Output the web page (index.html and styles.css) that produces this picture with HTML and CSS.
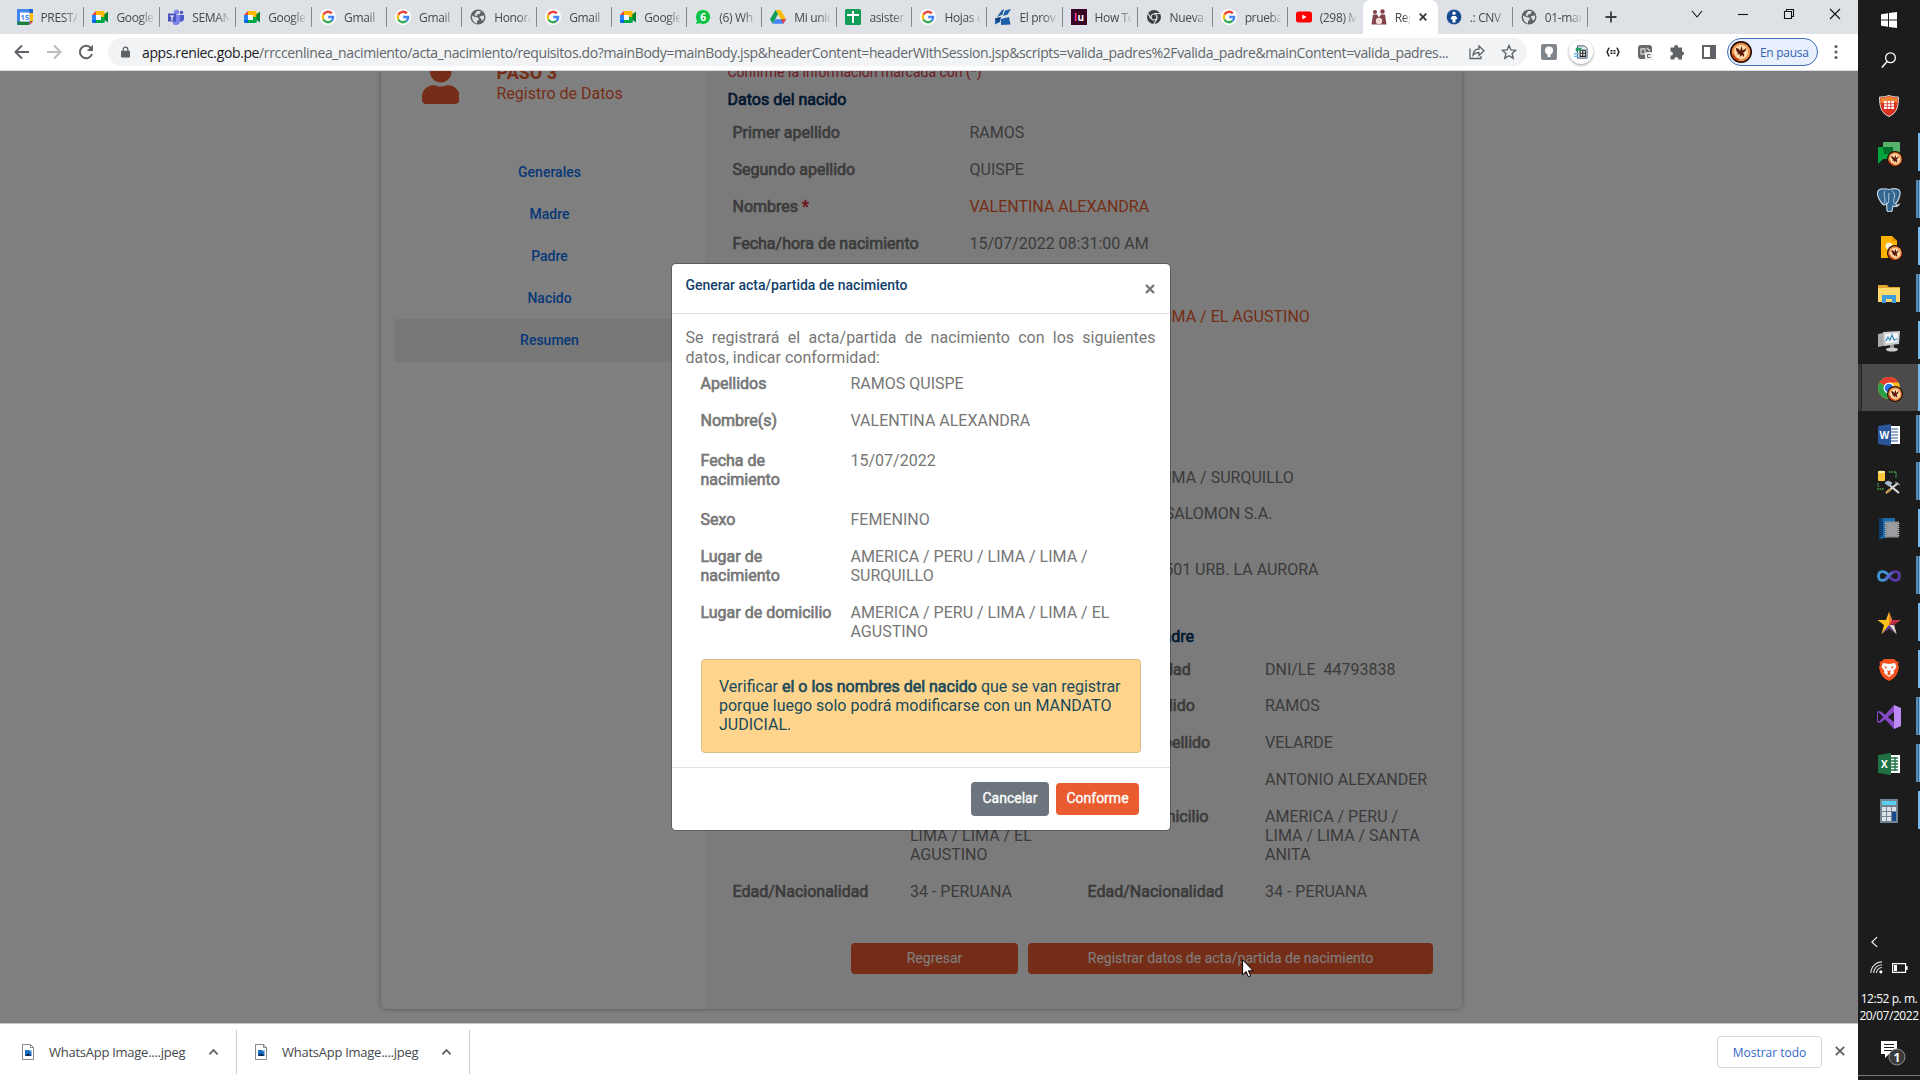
FILE: index.html
```html
<!DOCTYPE html>
<html lang="es">
<head>
<meta charset="utf-8">
<title>Registro de Datos</title>
<link rel="stylesheet" href="styles.css">
</head>
<body>
<svg class="defs" aria-hidden="true">
  <defs>
    <symbol id="google" viewBox="0 0 16 16"><circle cx="8" cy="8" r="8" fill="#fff"/><g fill="none" stroke-width="2.3"><path d="M11.8 4.4A5.2 5.2 0 0 0 3.4 5.6" stroke="#ea4335"/><path d="M3.4 5.6a5.2 5.2 0 0 0 0 4.8" stroke="#fbbc05"/><path d="M3.4 10.4a5.2 5.2 0 0 0 8.1 1.5" stroke="#34a853"/><path d="M11.5 11.9A5.2 5.2 0 0 0 13.2 8H8.2" stroke="#4285f4"/></g></symbol>
    <symbol id="meet" viewBox="0 0 16 16"><path d="M4 2v4H0z" fill="#ea4335"/><path d="M0 6h4v5H0z" fill="#2684fc"/><path d="M0 11h4v3H1.3A1.3 1.3 0 0 1 0 12.700z" fill="#0066da"/><path d="M4 2h7.500A1.300 1.300 0 0 1 12.800 3.300V8H9V6H4z" fill="#ffba00"/><path d="M4 11h5V8h3.800v4.700a1.300 1.300 0 0 1-1.300 1.300H4z" fill="#00ac47"/><path d="M12.300 5.500 16 2.500v11l-3.700-3z" fill="#00832d"/><path d="M4 6h5v5H4z" fill="#fff"/></symbol>
    <symbol id="globe" viewBox="0 0 16 16"><circle cx="8" cy="8" r="7.500" fill="#5f6368"/><path d="M2 6.500 5 8l3 .5 1 2-2 1.500v2.500C4 14 1.800 11 2 6.500zM7 2l4 .3L9.500 5 7 5.500 6.500 7.500 4.500 6zM10.500 7l3.500-.5v3l-2 2.500-1-2.500-1.500-1z" fill="#dee1e6"/></symbol>
    <symbol id="phoenix" viewBox="0 0 22 22"><circle cx="11" cy="11" r="11" fill="#2b0d05"/><circle cx="11" cy="11" r="9.300" fill="#f0964e"/><circle cx="11" cy="11" r="7" fill="#ffdcae"/><path d="M6 7c2 0 3.500 1.500 4.500 3 .2-2 0-3 1.200-4.500.6 1.500.5 2.500 1 4l3.800-2.500c-.8 3.500-2.500 4.200-3.500 5 1.500.8 1.600 2.300.3 4l-1-2.300-2.300 2.300-.2-3-3 .6L8.300 12C6.800 11 6 9.500 6 7z" fill="#5a1707"/><path d="M3 13a8.500 8.500 0 0 0 6 6" stroke="#d23c10" stroke-width="1.800" fill="none"/></symbol>
    <symbol id="jpeg" viewBox="0 0 12 16"><path d="M.5.5h8l3 3v12H.5z" fill="#fff" stroke="#888"/><path d="M8.500.5v3h3" fill="none" stroke="#888"/><path d="M3 6h6.500v6H3z" fill="#1b6fc2"/><path d="m3 12 3-3 3.500 3z" fill="#0b2e55"/><path d="M6.500 6h3v2z" fill="#9bd0f5"/></symbol>
    <symbol id="caret" viewBox="0 0 12 8"><path d="m1.500 6.500 4.500-4.500 4.500 4.500" fill="none" stroke="#5f6368" stroke-width="2"/></symbol>
  </defs>
</svg>

<div class="desktop">
<div class="browser">
  <header class="tabs">
    <div class="tab"><svg class="fav" viewBox="0 0 16 16"><path d="M0 0h16v12l-4 4H0z" fill="#4285f4"/><path d="M12 0h4v4h-4z" fill="#1967d2"/><path d="M12.500 4H16v8h-3.500z" fill="#fbbc04"/><path d="M0 12.500h12V16H1z" fill="#188038"/><path d="M12.500 12.500H16L12.500 16z" fill="#ea4335"/><path d="M3 3.500h9.500v9H3z" fill="#fff"/><text x="3.600" y="11" font-size="7.500" font-weight="700" fill="#4285f4">15</text></svg><span>PRESTA</span></div>
    <div class="tab"><svg class="fav"><use href="#meet"/></svg><span>Google</span></div>
    <div class="tab"><svg class="fav" viewBox="0 0 16 16"><circle cx="8.500" cy="3" r="2.500" fill="#7b83eb"/><circle cx="13.500" cy="3.500" r="1.800" fill="#5059c9"/><path d="M11 6h5v4a3 3 0 0 1-5 2z" fill="#5059c9"/><path d="M5 6h7v6a4 4 0 0 1-7.500 2z" fill="#7b83eb"/><path d="M0 4.500h8v8H0z" fill="#4b53bc"/><path d="M2 6.500h4v1H4.600v4H3.400v-4H2z" fill="#fff"/></svg><span>SEMAN</span></div>
    <div class="tab"><svg class="fav"><use href="#meet"/></svg><span>Google</span></div>
    <div class="tab"><svg class="fav"><use href="#google"/></svg><span>Gmail</span></div>
    <div class="tab"><svg class="fav"><use href="#google"/></svg><span>Gmail</span></div>
    <div class="tab"><svg class="fav"><use href="#globe"/></svg><span>Honora</span></div>
    <div class="tab"><svg class="fav"><use href="#google"/></svg><span>Gmail</span></div>
    <div class="tab"><svg class="fav"><use href="#meet"/></svg><span>Google</span></div>
    <div class="tab"><svg class="fav" viewBox="0 0 16 16"><path d="M8 .5A7.500 7.500 0 1 1 4.500 14.600L.5 15.600l1-3.800A7.500 7.500 0 0 1 8 .5z" fill="#0fc144" stroke="#fff" stroke-width=".6"/><text x="5.200" y="11.700" font-size="10" font-weight="700" fill="#fff">6</text></svg><span>(6) Wh</span></div>
    <div class="tab"><svg class="fav" viewBox="0 0 16 16"><path d="M5.500 1h5L16 10.300h-5z" fill="#fbbc04"/><path d="M5.500 1 8 5.300 2.700 14.700 0 10.300z" fill="#0f9d58"/><path d="M5.300 10.300H16l-2.700 4.400H2.700z" fill="#4285f4"/><path d="M11 10.300h5l-2.700 4.400z" fill="#ea4335"/></svg><span>Mi unid</span></div>
    <div class="tab"><svg class="fav" viewBox="0 0 16 16"><rect width="16" height="16" rx="1.500" fill="#0f9d58"/><path d="M7 2h2v12H7zM2 5h12v2H2z" fill="#fff"/></svg><span>asisten</span></div>
    <div class="tab"><svg class="fav"><use href="#google"/></svg><span>Hojas d</span></div>
    <div class="tab"><svg class="fav" viewBox="0 0 16 16"><path d="M6.500 1.500 9 0 7.500 5.500 2 8zM0 9.500 6 8 5 13l-5 2.500zM10 1.500 16 0l-3.500 5.500L8 7zM6 10l8-2 1.500 7.500L6 16z" fill="#1d5fa8"/><path d="m0 9.500 6-1.500-3 5z" fill="#123b70"/></svg><span>El prove</span></div>
    <div class="tab"><svg class="fav" viewBox="0 0 16 16"><path d="M0 0h16v16H0z" fill="#3a0426"/><text x="3" y="12" font-size="10" font-weight="700" fill="#ff3f94">l</text><text x="6.500" y="12" font-size="10" font-weight="700" fill="#fff">u</text></svg><span>How To</span></div>
    <div class="tab"><svg class="fav" viewBox="0 0 16 16"><circle cx="8" cy="8" r="7" fill="#3c4043"/><circle cx="8" cy="8" r="3" fill="#3c4043" stroke="#dee1e6" stroke-width="1.200"/><path d="M8 4.500h6.500M5 9.800 2 4.500M11 9.800 7.800 15" stroke="#dee1e6" stroke-width="1.200"/></svg><span>Nueva</span></div>
    <div class="tab"><svg class="fav"><use href="#google"/></svg><span>prueba</span></div>
    <div class="tab nosep"><svg class="fav" viewBox="0 0 16 16"><rect y="2.500" width="16" height="11" rx="2.500" fill="#f00"/><path d="m6.300 5.500 4.200 2.500-4.200 2.500z" fill="#fff"/></svg><span>(298) M</span></div>
    <div class="tab active"><svg class="fav" viewBox="0 0 16 16"><path d="M2 5.500h4l2 3 2-3h4l1.500 10H.5z" fill="#80444a"/><circle cx="4" cy="3" r="2" fill="#80444a"/><circle cx="11.500" cy="2.500" r="2.200" fill="#80444a"/><circle cx="8" cy="12" r="3.200" fill="#f1dcd9"/></svg><span>Reg</span><svg class="close-tab" viewBox="0 0 8 8"><path d="m.7.7 6.600 6.600M7.300.7.7 7.300" stroke="#333" stroke-width="1.700"/></svg></div>
    <div class="tab"><svg class="fav" viewBox="0 0 16 16"><circle cx="8" cy="8" r="7.700" fill="#15498f" stroke="#fff" stroke-width=".5"/><circle cx="8" cy="4.300" r="1.700" fill="#fff"/><path d="M6 7h4l1.500 3-2 .5v3h-3v-3l-2-.5z" fill="#fff"/></svg><span>.: CNV</span></div>
    <div class="tab"><svg class="fav"><use href="#globe"/></svg><span>01-mar</span></div>
    <svg class="new-tab" viewBox="0 0 12 12"><path d="M6 .5v11M.5 6h11" stroke="#3c4043" stroke-width="1.800"/></svg>
    <div class="window-buttons">
      <svg viewBox="0 0 12 12"><path d="m1 3 5 6 5-6" /></svg>
      <svg viewBox="0 0 12 12"><path d="M1 6.500h10" /></svg>
      <svg viewBox="0 0 12 12"><path d="M1.500 3.500h7v7h-7zM3.500 3.500v-2h7v7h-2" /></svg>
      <svg viewBox="0 0 12 12"><path d="m1 1 10 10M11 1 1 11" /></svg>
    </div>
  </header>

  <div class="toolbar">
    <div class="tool"><svg viewBox="0 0 16 16"><path d="M15 8H2M8 1.500 1.500 8 8 14.500" stroke="#5f6368" stroke-width="2" fill="none"/></svg></div>
    <div class="tool"><svg viewBox="0 0 16 16"><path d="M1 8h13M8 1.500 14.500 8 8 14.500" stroke="#babcbe" stroke-width="2" fill="none"/></svg></div>
    <div class="tool"><svg viewBox="0 0 16 16"><path d="M13 4.200A6.200 6.200 0 1 0 14 10" stroke="#5f6368" stroke-width="2" fill="none"/><path d="M15 .8v6.200H8.800z" fill="#5f6368"/></svg></div>
    <div class="omnibox">
      <svg class="lock" viewBox="0 0 10 12"><path d="M1 4.500h8a1 1 0 0 1 1 1V11a1 1 0 0 1-1 1H1a1 1 0 0 1-1-1V5.500a1 1 0 0 1 1-1z" fill="#5f6368"/><path d="M2.500 5V3a2.500 2.500 0 0 1 5 0v2" fill="none" stroke="#5f6368" stroke-width="1.400"/></svg>
      <span class="url"><b>apps.reniec.gob.pe</b>/rrccenlinea_nacimiento/acta_nacimiento/requisitos.do?mainBody=mainBody.jsp&amp;headerContent=headerWithSession.jsp&amp;scripts=valida_padres%2Fvalida_padre&amp;mainContent=valida_padres...</span>
      <svg class="omni-icon" viewBox="0 0 16 16"><path d="M1 4.500v10h11V12M4 11c.5-4 3-6 6-6V2l5 4.800-5 4.700V8.500c-3 0-4.500.8-6 2.500z" fill="none" stroke="#5f6368" stroke-width="1.300"/></svg>
      <svg class="omni-icon" viewBox="0 0 16 16"><path d="m8 1.500 1.900 4.400 4.800.4-3.600 3.200 1.100 4.700L8 11.700l-4.200 2.500 1.100-4.700L1.300 6.300l4.800-.4z" fill="none" stroke="#5f6368" stroke-width="1.400"/></svg>
    </div>
    <div class="tool"><svg viewBox="0 0 16 16"><rect width="16" height="16" rx="2" fill="#80868b"/><circle cx="8" cy="6.500" r="4" fill="#fff"/><path d="M6.500 10h3v3h-3z" fill="#fff"/></svg></div>
    <div class="tool"><div class="round"><svg viewBox="0 0 16 16"><path d="M4 1h8l3 3v11H4z" fill="#dfe9f5" stroke="#34475f"/><path d="M7 6h6v7H7zM7 9.500h6M10 6v7" fill="#fff" stroke="#222" stroke-width="1.200"/><path d="M2 3h7l-2 5-2-2-3 2z" fill="#2c9a63"/><path d="M0 10h5M0 13h5" stroke="#6fb7e6" stroke-width="1.500"/></svg></div></div>
    <div class="tool"><svg viewBox="0 0 16 16"><path d="M4.500 4C2.500 4 3.500 7 2 8c1.500 1 .5 4 2.500 4M11.500 4c2 0 1 3 2.500 4-1.500 1-.5 4-2.500 4M5.500 6.700h2m1 0h2M5.500 9.300h2m1 0h2" fill="none" stroke="#222" stroke-width="1.500"/></svg></div>
    <div class="tool"><svg viewBox="0 0 16 16"><rect x="1" y="1" width="14" height="14" rx="3" fill="#666a6d"/><path d="M4 5h4v5H4zM10 4l3 3" stroke="#d5d5d5" fill="none" stroke-width="1.300"/><rect x="8" y="8" width="8" height="8" rx="2" fill="#eee"/><path d="M13.500 10.500h-3v3h3" fill="none" stroke="#666"/></svg></div>
    <div class="tool"><svg viewBox="0 0 16 16"><path d="M1.500 3.500h3.700a2 2 0 1 1 3.800 0h4v4a2 2 0 1 1 0 4v4H9.200a1.900 1.900 0 1 0-3.700 0h-4v-4a1.900 1.900 0 1 0 0-3.700z" fill="#5f6368"/></svg></div>
    <div class="tool"><svg viewBox="0 0 16 16"><path d="M2 2h12v12H2z" fill="none" stroke="#5f6368" stroke-width="2"/><path d="M9 2h5v12H9z" fill="#5f6368"/></svg></div>
    <div class="profile"><svg class="avatar"><use href="#phoenix"/></svg><span>En pausa</span></div>
    <div class="tool last"><svg viewBox="0 0 16 16"><g fill="#5f6368"><circle cx="8" cy="2.500" r="1.600"/><circle cx="8" cy="8" r="1.600"/><circle cx="8" cy="13.500" r="1.600"/></g></svg></div>
  </div>

  <main class="page">
    <div class="card">
      <aside class="side">
        <div class="step">
          <svg class="user" viewBox="0 0 448 512"><path d="M224 256c70.700 0 128-57.300 128-128S294.700 0 224 0 96 57.300 96 128s57.300 128 128 128zm89.600 32h-16.700c-22.200 10.200-46.900 16-72.900 16s-50.600-5.800-72.900-16h-16.700C60.200 288 0 348.200 0 422.400V464c0 26.500 21.500 48 48 48h352c26.500 0 48-21.500 48-48v-41.600c0-74.200-60.200-134.400-134.400-134.400z"/></svg>
          <div><div class="step-no">PASO 3</div><div>Registro de Datos</div></div>
        </div>
        <nav><a>Generales</a><a>Madre</a><a>Padre</a><a>Nacido</a><a class="current">Resumen</a></nav>
      </aside>
      <section class="summary">
        <p class="note">Confirme la información marcada con (*)</p>
        <h2>Datos del nacido</h2>
        <div class="row"><label>Primer apellido</label><span>RAMOS</span></div>
        <div class="row"><label>Segundo apellido</label><span>QUISPE</span></div>
        <div class="row"><label>Nombres <i>*</i></label><span class="mark">VALENTINA ALEXANDRA</span></div>
        <div class="row"><label>Fecha/hora de nacimiento</label><span>15/07/2022 08:31:00 AM</span></div>
        <div class="row short"></div>
        <div class="row"><label></label><span class="mark">AMERICA / PERU / LIMA / LIMA / EL AGUSTINO</span></div>
        <div class="row birthplace"><label></label><span>AMERICA / PERU / LIMA / LIMA / SURQUILLO</span></div>
        <div class="row short"><label></label><span class="centre">SALOMON S.A.</span></div>
        <div class="row address"><label></label><span class="street">501 URB. LA AURORA</span></div>
        <div class="parents">
          <div class="mother">
            <div class="row"><label></label><span>AMERICA / PERU / LIMA / LIMA / EL AGUSTINO</span></div>
            <div class="row"><label>Edad/Nacionalidad</label><span>34 - PERUANA</span></div>
          </div>
          <div class="father">
            <h2>Datos del padre</h2>
            <div class="row short"><label class="doc-id">Doc. identidad</label><span>DNI/LE&nbsp; 44793838</span></div>
            <div class="row"><label>Primer apellido</label><span>RAMOS</span></div>
            <div class="row"><label>Segundo apellido</label><span>VELARDE</span></div>
            <div class="row"><label></label><span>ANTONIO ALEXANDER</span></div>
            <div class="row"><label>Lug. de domicilio</label><span>AMERICA / PERU / LIMA / LIMA / SANTA ANITA</span></div>
            <div class="row"><label>Edad/Nacionalidad</label><span>34 - PERUANA</span></div>
          </div>
        </div>
        <div class="actions"><button class="back">Regresar</button><button class="send">Registrar datos de acta/partida de nacimiento</button></div>
      </section>
    </div>

    <div class="backdrop">
      <div class="modal">
        <div class="modal-head"><h3>Generar acta/partida de nacimiento</h3><svg viewBox="0 0 10 10"><path d="m1 1 8 8M9 1 1 9" stroke="#777" stroke-width="2.400"/></svg></div>
        <div class="modal-body">
          <p>Se registrará el acta/partida de nacimiento con los siguientes datos, indicar conformidad:</p>
          <dl>
            <dt>Apellidos</dt><dd>RAMOS QUISPE</dd>
            <dt>Nombre(s)</dt><dd>VALENTINA ALEXANDRA</dd>
            <dt class="date">Fecha de nacimiento</dt><dd class="date">15/07/2022</dd>
            <dt>Sexo</dt><dd>FEMENINO</dd>
            <dt>Lugar de nacimiento</dt><dd>AMERICA / PERU / LIMA / LIMA / SURQUILLO</dd>
            <dt>Lugar de domicilio</dt><dd>AMERICA / PERU / LIMA / LIMA / EL AGUSTINO</dd>
          </dl>
          <div class="alert">Verificar <b>el o los nombres del nacido</b> que se van registrar porque luego solo podrá modificarse con un MANDATO JUDICIAL.</div>
        </div>
        <div class="modal-foot"><button class="cancel">Cancelar</button><button class="ok">Conforme</button></div>
      </div>
    </div>
  </main>

  <footer class="downloads">
    <div class="file"><svg class="doc"><use href="#jpeg"/></svg><span>WhatsApp Image....jpeg</span><svg class="up"><use href="#caret"/></svg></div>
    <div class="file"><svg class="doc"><use href="#jpeg"/></svg><span>WhatsApp Image....jpeg</span><svg class="up"><use href="#caret"/></svg></div>
    <div class="show-all">Mostrar todo</div>
    <svg class="close-bar" viewBox="0 0 10 10"><path d="m.8.8 8.400 8.400M9.200.8.8 9.200" stroke="#5f6368" stroke-width="1.900"/></svg>
  </footer>
</div>

<aside class="taskbar">
  <div class="task start"><svg viewBox="0 0 16 16"><path d="m0 2.200 7-1v6.300H0zm8-1.100L16 0v7.500H8zM0 8.500h7v6.300l-7-1zm8 0h8V16l-8-1.100z" fill="#fff"/></svg></div>
  <div class="task search"><svg viewBox="0 0 24 24"><circle cx="14" cy="9" r="6.500" fill="none" stroke="#fff" stroke-width="1.700"/><path d="m9.500 14-7 8" stroke="#fff" stroke-width="1.900"/></svg></div>
  <div class="task"><svg viewBox="0 0 24 24"><path d="M12 1.500c3 1 6 1.500 9.500 1.500-.2 10-1.500 16-9.500 19.500C4 19 2.700 13 2.500 3 6 3 9 2.500 12 1.500z" fill="#d9321f" stroke="#ddd"/><path d="M12 2.500c3 1 5.500 1.300 8.500 1.300v5c-6-2-11 1-17 0v-5c3 0 5.500-.3 8.500-1.300z" fill="#ee8434"/><path d="M7 7h10v8H7z" fill="#fff"/><path d="M7 9.700h10M7 12.300h10M10.300 7v8M13.700 7v8" stroke="#d9321f" stroke-width=".8"/></svg></div>
  <div class="task run"><svg viewBox="0 0 24 24"><rect x="6" y="1" width="17" height="14" rx="1" fill="#57b36b"/><path d="M1 6h15v12H6l-5 5z" fill="#00a53c"/><path d="M6 6h10v7H7z" fill="#00722b"/></svg><svg class="mini"><use href="#phoenix"/></svg></div>
  <div class="task multi"><svg viewBox="0 0 24 24"><path d="M7 1c3-.5 4 .5 5 .5S16 0 20 1s3.500 5 2 9c-.8 2.500-1.500 4-3 5v2c1 .5 2 0 3-.5-1 2-4 2.500-6 1.500l-1 5c-2 1.500-4 1-5-.5l-.5-7c-1 1.500-3 2-4 .5C2 12 .5 9 .5 5 .5 2 3 .5 7 1z" fill="#336791" stroke="#c5d4e1" stroke-width="1.200"/><path d="M8 3c-2 3 0 6 0 9s-1 3-3 4M15 3c3 2 3 6 2 8s0 4 1 5M12 5c-1 3 1 9-2 11" fill="none" stroke="#c5d4e1" stroke-width=".9"/></svg></div>
  <div class="task run"><svg viewBox="0 0 24 24"><path d="M4 1h11l5 5v17H4z" fill="#ffb300"/><path d="M15 1v5h5z" fill="#e59100"/><circle cx="12" cy="11" r="3.500" fill="#fff6df"/></svg><svg class="mini"><use href="#phoenix"/></svg></div>
  <div class="task multi"><svg viewBox="0 0 24 24"><path d="M1 3h9l2 2h11v15H1z" fill="#e2a52e"/><path d="M1 6h22v14H1z" fill="#ffda6b"/><path d="M5 13h14v8h-4v-4H9v4H5z" fill="#3e9bdc"/></svg></div>
  <div class="task run"><svg viewBox="0 0 24 24"><path d="m1 5 10-2v13L1 18z" fill="#a8abad"/><path d="m6 3 17-1-1 13-15 2z" fill="#c9cdd0"/><path d="m8 5 13-1-1 9-11 1.500z" fill="#f1f7fa"/><path d="m9 12 2-4 2 3 2-5 2 5 3-1" stroke="#2d82b5" fill="none" stroke-width="1.100"/><path d="M13 16h4v3h-4z" fill="#999"/><ellipse cx="15" cy="20.500" rx="6" ry="2" fill="#ccc"/></svg></div>
  <div class="task multi selected"><svg viewBox="0 0 24 24"><circle cx="12" cy="12" r="11" fill="#fbc116"/><path d="M12 12 2.500 6.500A11 11 0 0 1 21.500 6.500H12z" fill="#e33b2e"/><path d="M2.500 6.500A11 11 0 0 0 12 23l4.500-8.500L12 12z" fill="#2a9f48"/><circle cx="12" cy="12" r="5.500" fill="#fff"/><circle cx="12" cy="12" r="4.300" fill="#2673e8"/></svg><svg class="mini"><use href="#phoenix"/></svg></div>
  <div class="task multi"><svg viewBox="0 0 24 24"><path d="M12 3h11v18H12z" fill="#fff"/><path d="M14 6h7M14 9h7M14 12h7M14 15h7M14 18h7" stroke="#2a5699" stroke-width="1.200"/><path d="M1 3 14 1v22L1 21z" fill="#2a5699"/><text x="2.500" y="16" font-size="10" font-weight="700" fill="#fff">W</text></svg></div>
  <div class="task multi"><svg viewBox="0 0 24 24"><rect x="1" y="1" width="7" height="10" rx="1" fill="#ffc83a"/><ellipse cx="4.500" cy="2" rx="3.500" ry="1.200" fill="#fff1a8"/><path d="M12 2h7v6M1 13v6h6" fill="none" stroke="#4fae54" stroke-width="1.300" stroke-dasharray="1.500 1"/><path d="m9 23 12-10M10 13l12 10" stroke="#d8d8d8" stroke-width="2.200"/><path d="m8 13 3-2 4 2-3 3zM18 12l5 3" stroke="#a9b8cc" fill="#a9b8cc"/><path d="m9 23 5-4" stroke="#ce9748" stroke-width="2.200"/></svg></div>
  <div class="task run"><svg viewBox="0 0 24 24"><path d="M2 1h16v18L2 22z" fill="#1f6aa8"/><path d="M2 1h4v17l-4 4z" fill="#0f3f6d"/><rect x="8.500" y="5" width="13" height="15" fill="#77797b" stroke="#bbb" stroke-width="1.600" stroke-dasharray="1 1"/><path d="M9.500 6h11v13h-11z" fill="#9b9da0"/></svg></div>
  <div class="task multi"><svg viewBox="0 0 24 24"><path d="M12 12C8 6 1.500 6.500 1.500 12S8 18 12 12z" fill="none" stroke="#4295d4" stroke-width="2.800"/><path d="M12 12c4-6 10.500-5.500 10.500 0S16 18 12 12z" fill="none" stroke="#5a3ba8" stroke-width="2.800"/><path d="m8 15.500 7-7" stroke="#5267c9" stroke-width="2.800"/></svg></div>
  <div class="task run"><svg viewBox="0 0 24 24"><path d="m12 1 3 8h8.500L17 14l2.500 9-7.500-5.500L4.500 23 7 14 .5 9H9z" fill="#fcc21b"/><path d="M12 1v13l3-5z" fill="#ef7b2d"/><path d="M23.500 9 12 14l3-5z" fill="#c52b4b"/><path d="m23.500 9-6.500 5-5 0z" fill="#8b1c3d"/><path d="m17 14 2.500 9-7.500-9z" fill="#d8d8d8"/><path d="M12 14v3.500l7.500 5.500zM12 14v3.500L4.500 23z" fill="#55309c"/></svg></div>
  <div class="task run"><svg viewBox="0 0 24 24"><path d="M7 1h10l2 2 2.500 1-.5 3 1 2c-1.500 7-3 11-10 14C5 20 3.500 16 2 9l1-2-.5-3L5 3z" fill="#f4511e"/><path d="m6 5 6 1 6-1 1.500 4-3 4 .5 2-5 4-5-4 .5-2-3-4z" fill="#fff"/><path d="m7 8 3 1-1 2zM17 8l-3 1 1 2zM10 12l2 1 2-1-1 3 1 1-2 1.500L10 16l1-1z" fill="#f4511e"/></svg></div>
  <div class="task multi"><svg viewBox="0 0 24 24"><path d="m17 0 7 3v18l-7 3z" fill="#bd8af5"/><path d="M17 0 3 15.500l-3 2v-11l3 2L17 24v-7L4 6.500 1 6v12l3-.5L17 7z" fill="#8549c6"/></svg></div>
  <div class="task multi"><svg viewBox="0 0 24 24"><path d="M12 3h11v18H12z" fill="#fff"/><path d="M14 6h7M14 9h7M14 12h7M14 15h7M14 18h7M18 5v14" stroke="#207245" stroke-width="1.300"/><path d="M1 3 14 1v22L1 21z" fill="#207245"/><text x="4" y="16" font-size="10" font-weight="700" fill="#fff">X</text></svg></div>
  <div class="task run"><svg viewBox="0 0 24 24"><path d="M3 0h18v24H3z" fill="#748391"/><path d="M5 2h14v4H5z" fill="#5bd0ee"/><path d="M5 8h4v4H5zm5 0h4v4h-4zm5 0h4v4h-4zM5 13h4v4H5zm5 0h4v4h-4zM5 18h4v4H5zm5 0h4v4h-4z" fill="#dce3e9"/><path d="M15 13h4v9h-4z" fill="#17498d"/></svg></div>
  <div class="tray">
    <svg class="chev" viewBox="0 0 8 12"><path d="M7 .5 1 6l6 5.500" fill="none" stroke="#fff" stroke-width="1.300"/></svg>
    <div class="status">
      <svg viewBox="0 0 14 14"><path d="M1 13A12 12 0 0 1 13 1M4 13a9 9 0 0 1 9-9M7 13a6 6 0 0 1 6-6" fill="none" stroke="#ddd" stroke-width="1.200"/><circle cx="11.700" cy="11.700" r="1.700" fill="#fff"/></svg>
      <svg class="battery" viewBox="0 0 16 10"><path d="M.6.6h13v8.800H.6z" fill="none" stroke="#fff" stroke-width="1.200"/><path d="M2 2h3v6H2zM14 3h1.500v4H14z" fill="#fff"/></svg>
    </div>
    <div class="clock">12:52 p. m.<br>20/07/2022</div>
    <svg class="notify" viewBox="0 0 26 26"><path d="M1 1h16v13H9l-4 4v-4H1z" fill="#fff"/><path d="M4 4.500h10M4 7.500h10M4 10.500h10" stroke="#1c1c1c" stroke-width="1.200"/><circle cx="17" cy="17" r="8" fill="#3b3b3b" stroke="#8a8a8a"/><text x="13.500" y="21.500" font-size="12" font-weight="700" fill="#fff">1</text></svg>
  </div>
</aside>
</div>
<svg class="cursor" viewBox="0 0 12 19"><path d="M.6.8v15l3.500-3.300 2.300 5.300 2.300-1-2.300-5h4.800z" fill="#fff" stroke="#000"/></svg>
</body>
</html>
```
FILE: styles.css
```css
* { box-sizing: border-box; }
body { margin: 0; width: 1920px; height: 1080px; overflow: hidden; font-family: "Open Sans", "Noto Sans", sans-serif; }
svg { display: block; flex: none; }
.defs { position: absolute; width: 0; height: 0; }
.desktop { display: flex; height: 1080px; }
.browser { width: 1858px; display: flex; flex-direction: column; }

/* tab strip */
.tabs { height: 34px; background: #dee1e6; display: flex; align-items: flex-start; padding-left: 8.500px; }
.tab { width: 75.050px; height: 34px; display: flex; align-items: center; padding: 0 7px 0 8px; position: relative; flex: none; }
.tab:nth-child(-n+4) { width: 75.900px; }
.tab::after { content: ""; position: absolute; right: 0; top: 7px; width: 1px; height: 20px; background: #83878c; }
.tab.nosep::after, .tab.active::after { display: none; }
.fav { width: 16px; height: 16px; }
.tab span { margin-left: 8px; width: 37px; font-size: 12px; letter-spacing: -.35px; color: #45494d; white-space: nowrap; overflow: hidden; -webkit-mask-image: linear-gradient(90deg, #000 65%, rgba(0,0,0,.15)); mask-image: linear-gradient(90deg, #000 65%, rgba(0,0,0,.15)); }
.tab.active { background: #fff; border-radius: 8px 8px 0 0; }
.tab.active span { width: 15px; }
.close-tab { width: 8px; height: 8px; margin-left: 9px; }
.new-tab { width: 12px; height: 12px; margin: 11px 0 0 17px; }
.window-buttons { display: flex; gap: 34px; margin: 8px 17px 0 auto; }
.window-buttons svg { width: 12px; height: 12px; fill: none; stroke: #111; stroke-width: 1.100; }

/* toolbar */
.toolbar { height: 37px; background: #fff; border-bottom: 1px solid #d9dbde; display: flex; align-items: center; padding-left: 6px; flex: none; }
.tool { width: 32px; display: flex; justify-content: center; flex: none; }
.tool svg { width: 16px; height: 16px; }
.tool.last { margin-left: 2px; }
.omnibox { width: 1419px; height: 28px; margin: 0 6px; background: #f1f3f4; border-radius: 14px; display: flex; align-items: center; padding-left: 13px; flex: none; }
.lock { width: 9px; height: 12px; margin-right: 12px; }
.url { width: 1319px; font-size: 14px; letter-spacing: -.378px; color: #63676b; white-space: nowrap; }
.url b { font-weight: 400; color: #202124; }
.omni-icon { width: 16px; height: 16px; margin-left: 8px; margin-right: 8px; }
.round { width: 24px; height: 24px; border-radius: 50%; background: #fff; box-shadow: 0 1px 3px rgba(0,0,0,.4); display: grid; place-items: center; }
.tool .round svg { width: 14px; height: 14px; }
.profile { width: 91px; height: 28px; margin-left: 2px; border: 1px solid #3c6fb4; border-radius: 14px; background: #e8f0fe; display: flex; align-items: center; padding-left: 2px; gap: 8px; font-size: 12px; letter-spacing: -.3px; color: #3263b0; white-space: nowrap; flex: none; }
.avatar { width: 22px; height: 22px; }

/* page */
.page { height: 952px; position: relative; overflow: hidden; background: #fff; font-family: Roboto, sans-serif; font-size: 16px; line-height: 19px; color: #777; flex: none; }
.card { width: 1081px; height: 938px; margin-left: 380.500px; border-radius: 0 0 6px 6px; display: grid; grid-template-columns: 324px 1fr; overflow: hidden; box-shadow: 0 0 5px rgba(0,0,0,.35); }
.side { padding-left: 14px; }
.step { display: flex; gap: 37.500px; height: 80px; padding-left: 27px; color: #ea5b2f; }
.user { width: 37.500px; height: 43px; margin-top: -10px; fill: #ea5b2f; }
.step-no { font-size: 18px; font-weight: 700; line-height: 22px; margin-top: -9px; }
.side nav { width: 310px; }
.side a { display: block; height: 42px; line-height: 42px; text-align: center; font-size: 14px; font-weight: 500; color: #0f70ee; }
.side .current { height: 43px; background: #f0f0f0; }
.summary { background: #f6f6f6; }
.note { margin: -7px 0 0 23px; height: 17px; font-size: 14px; line-height: 17px; color: #dc3545; }
h2, label, dt, .alert b { font-weight: 400; -webkit-text-stroke: .65px currentColor; }
h2 { margin: 0 0 0 23px; padding-top: 9px; height: 33px; font-size: 16px; line-height: 19px; color: #00305e; }
.row { display: flex; min-height: 37px; padding: 9px 0; margin-left: 28px; }
.row.short { min-height: 36px; padding-bottom: 8px; }
.row label { width: 237px; flex: none; }
.row i { color: #dc3545; font-style: normal; }
.mark { color: #ea5b2f; }
.birthplace { margin-top: 124px; }
.centre { width: 303px; margin-top: -1px; text-align: right; }
.address { margin-top: 19px; }
.street { width: 349px; text-align: right; }
.parents { display: grid; grid-template-columns: 355px 1fr; margin-top: 30px; align-items: end; }
.father h2 { margin-left: 23px; }
.parents .row label { width: 177.500px; }
.parents .row .doc-id { padding-left: 1px; }
.parents .row span { width: 165px; }
.actions { display: flex; gap: 10px; margin: 33px 0 0 146.500px; }
button { border: 0; padding: 0; border-radius: 4px; font-family: Roboto, sans-serif; font-size: 14px; color: #fff; background: #ea5b2f; }
.actions button { height: 31px; padding-bottom: 1px; }
.back { width: 167px; }
.send { width: 405px; }

/* dialog */
.backdrop { position: absolute; inset: 0; background: rgba(0,0,0,.5); padding: 192px 0 0 671px; }
.modal { width: 500px; height: 568px; background: #fff; background-clip: padding-box; border: 1px solid rgba(0,0,0,.25); border-radius: 5px; display: flex; flex-direction: column; }
.modal-head { height: 50px; border-bottom: 1px solid #dee2e6; display: flex; justify-content: space-between; padding: 12px 15px 0 13.500px; }
.modal-head h3 { margin: 0; font-size: 14px; line-height: 18px; font-weight: 500; color: #123f6b; }
.modal-head svg { width: 10px; height: 10px; margin-top: 8px; }
.modal-body { padding: 14px 14.500px 0 13.500px; height: 453px; }
.modal-body p { margin: 0; line-height: 20px; text-align: justify; }
dl { margin: 0 0 0 15px; display: grid; grid-template-columns: 150px 270px; }
dt, dd { margin: 0; padding: 6px 15px 12px 0; }
dd { padding-right: 0; }
dt:not(:nth-child(11)) { padding-right: 40px; }
dt:last-of-type { padding-right: 0; }
dt.date, dd.date { padding-top: 9px; padding-bottom: 15px; }
.alert { margin: 6px 0 0 15.500px; width: 440px; height: 94px; padding: 17px; border: 1px solid #d9bd82; border-radius: 4px; background: #ffd58d; color: #19495b; }
.modal-foot { border-top: 1px solid #dee2e6; display: flex; justify-content: flex-end; align-items: center; gap: 7px; padding: 14px 31px 0 0; }
.modal-foot button { padding-bottom: 2px; -webkit-text-stroke: .35px #fff; }
.cancel { width: 78px; height: 34px; background: #6c757d; }
.ok { width: 83px; height: 32px; }

/* downloads */
.downloads { height: 57px; border-top: 1px solid #c8c8c8; background: #fff; display: flex; align-items: center; font-size: 13px; color: #45494d; }
.file { width: 233px; height: 44px; border-right: 1px solid #c9cbce; display: flex; align-items: center; padding-left: 18px; }
.file:first-child { width: 237px; padding-left: 22px; }
.doc { width: 12px; height: 16px; }
.file span { width: 159px; margin-left: 15px; white-space: nowrap; letter-spacing: -.26px; }
.up { width: 11px; height: 8px; }
.show-all { width: 105px; height: 32px; margin-left: auto; border: 1px solid #d5d7da; border-radius: 4px; display: grid; place-items: center; color: #3367c8; font-size: 12px; }
.close-bar { width: 10px; height: 10px; margin: 0 13px 2px 13px; }

/* taskbar */
.taskbar { width: 62px; background: #1c1c1c; color: #fff; display: flex; flex-direction: column; }
.task { height: 47px; display: flex; align-items: center; justify-content: center; position: relative; flex: none; }
.task svg { width: 24px; height: 24px; }
.task.start { height: 40px; }
.start svg { width: 16px; height: 16px; }
.task.search { height: 42px; padding-bottom: 2px; }
.search svg { width: 18px; height: 18px; }
.task .mini { position: absolute; left: 29px; top: 22px; width: 16px; height: 16px; }
.run::after, .multi::after { content: ""; position: absolute; right: 0; top: 4px; width: 2px; height: 38px; background: #76b9ed; }
.multi::after { width: 4px; background: linear-gradient(90deg, #5a8db5 2px, #39617f 2px, #39617f 3px, #76b9ed 3px); }
.selected { background: linear-gradient(90deg, #3a3a3a 3px, #262626 3px, #262626 4px, #4b4b4b 4px); }
.selected::after { top: 0; width: 2px; height: 47px; background: #76b9ed; }
.tray { margin-top: auto; height: 144px; display: flex; flex-direction: column; }
.chev { width: 7px; height: 12px; margin-left: 13px; }
.status { display: flex; gap: 9px; align-items: center; margin: 13px 0 0 12px; height: 13px; }
.status svg { width: 13px; height: 13px; }
.status .battery { width: 16px; height: 10px; }
.clock { margin-top: 16px; text-align: center; font-size: 12px; line-height: 17px; letter-spacing: -.45px; white-space: nowrap; }
.notify { width: 26px; height: 26px; margin: 16px 0 0 22px; }
.tray::after { content: ""; height: 1px; background: #777; margin-top: auto; margin-bottom: 4px; }
.cursor { position: absolute; left: 1242px; top: 959px; width: 12px; height: 19px; }
```
